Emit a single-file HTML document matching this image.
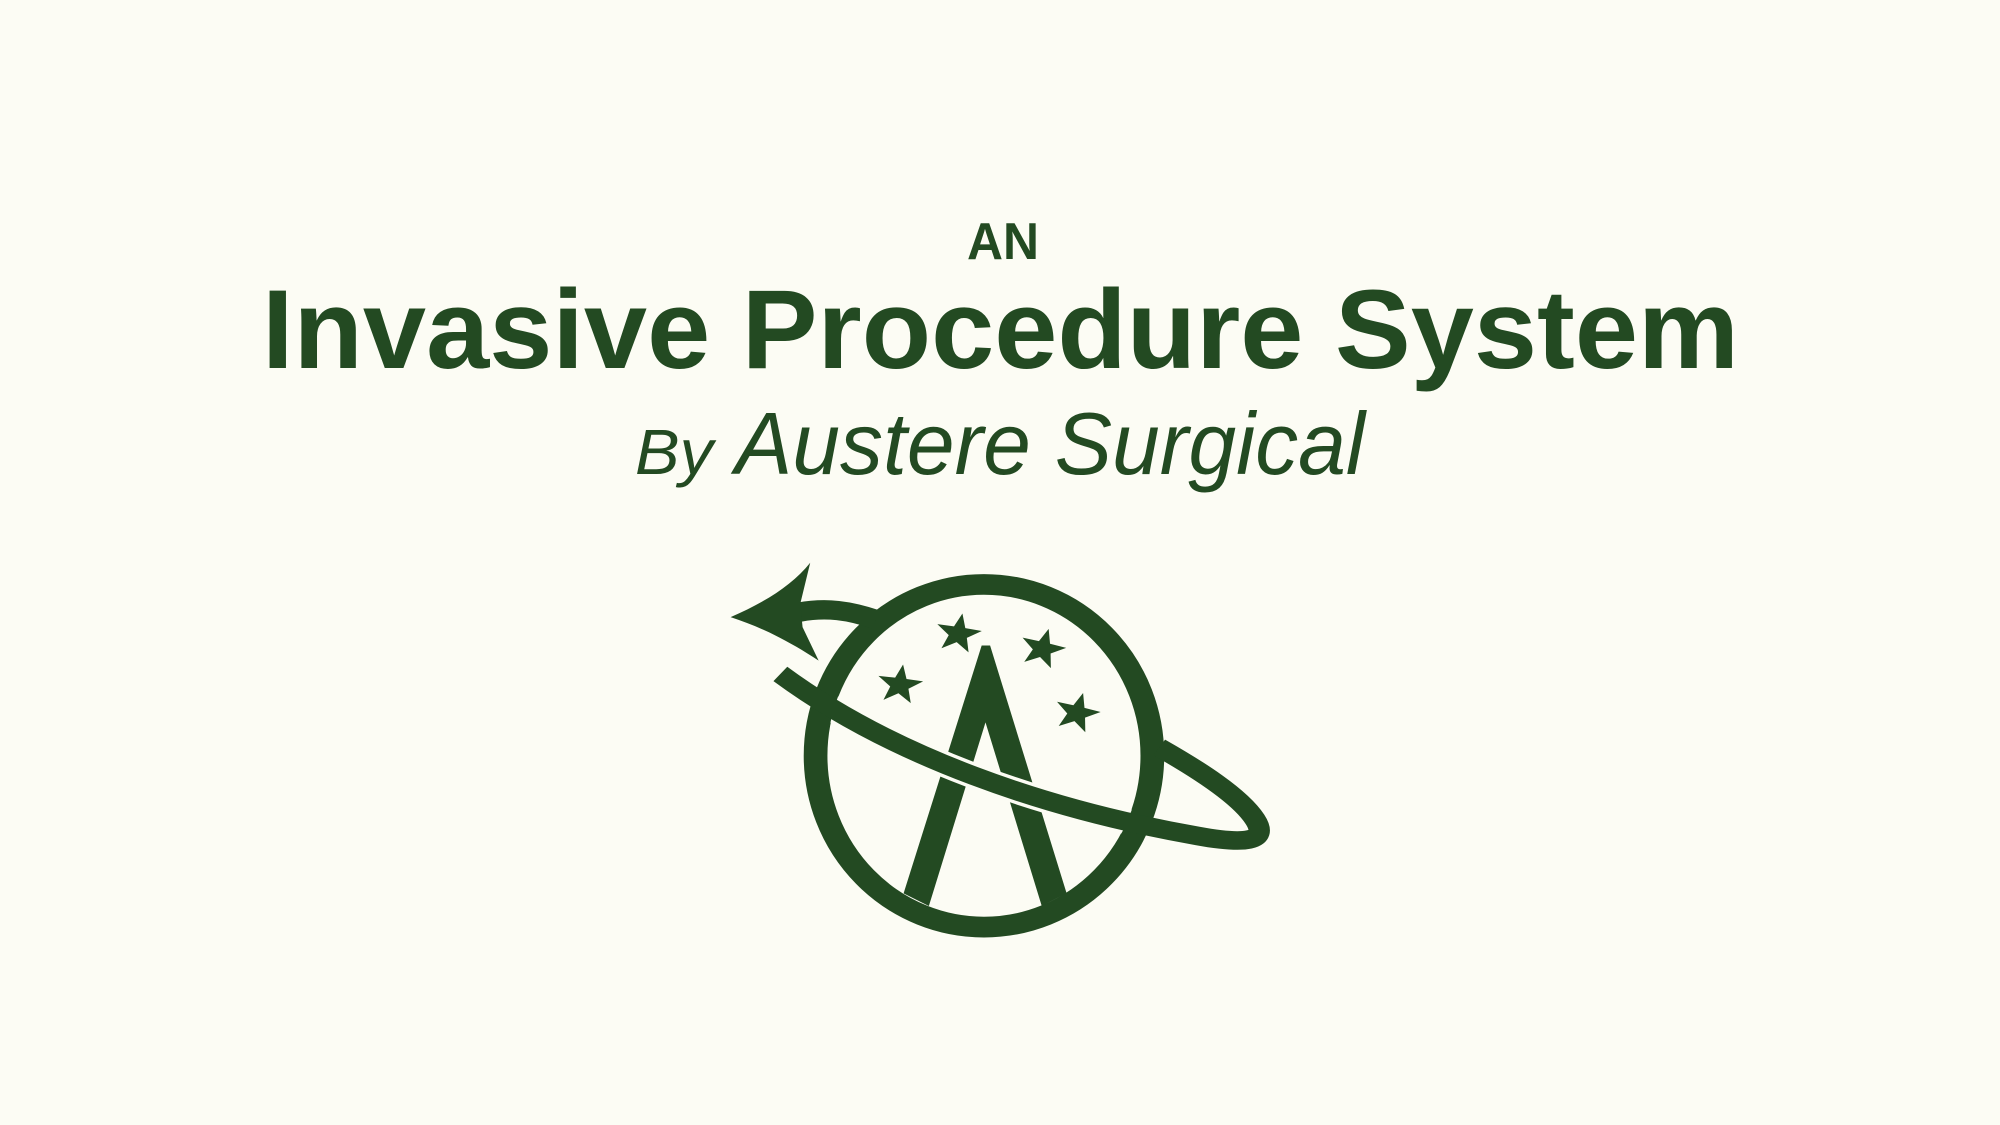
<!DOCTYPE html>
<html><head><meta charset="utf-8"><style>
html,body{margin:0;padding:0;background:#fcfcf4;}
svg{display:block}
</style></head><body>
<svg width="2000" height="1125" viewBox="0 0 2000 1125" xmlns="http://www.w3.org/2000/svg">
<rect width="2000" height="1125" fill="#fcfcf4"/>
<g fill="#234a22" font-family="'Liberation Sans', sans-serif">
<text x="967" y="259" font-size="52" font-weight="bold" textLength="72" lengthAdjust="spacingAndGlyphs">AN</text>
<text x="262" y="368" font-size="112" font-weight="bold" textLength="1477" lengthAdjust="spacingAndGlyphs">Invasive Procedure System</text>
<text x="635" y="474" font-size="64" font-style="italic" textLength="78" lengthAdjust="spacingAndGlyphs">By</text>
<text x="735" y="474" font-size="88" font-style="italic" textLength="630" lengthAdjust="spacingAndGlyphs">Austere Surgical</text>
</g>
<defs>
<clipPath id="inner"><ellipse cx="742" cy="640" rx="410" ry="482"/></clipPath>
<polygon id="st" points="0,-62 15,-20 59,-19 24,8 36,50 0,25 -36,50 -24,8 -59,-19 -15,-20"/>
</defs>
<g transform="translate(700,542) scale(0.3827,0.334)" fill="#234a22">
<ellipse cx="742" cy="640" rx="440" ry="513" fill="none" stroke="#234a22" stroke-width="62"/>
<path d="M736 310 L758 310 L958 1052 L893 1090 L746 540 L598 1090 L532 1052 Z"/>
<g clip-path="url(#inner)">
<path d="M210 395 C500 640 900 800 1300 880" fill="none" stroke="#fcfcf4" stroke-width="76"/>
</g>
<path d="M210 395 C500 640 900 800 1300 880 C1420 905 1490 900 1450 830 C1410 760 1300 680 1200 615" fill="none" stroke="#234a22" stroke-width="56"/>
<path d="M460 232 C390 205 330 195 260 210" fill="none" stroke="#234a22" stroke-width="58"/>
<path d="M80 225 C170 180 240 130 288 62 L262 185 L268 255 L310 355 C230 295 160 255 80 225 Z"/>
<use href="#st" transform="translate(675,275) rotate(10)"/>
<use href="#st" transform="translate(895,320) rotate(15)"/>
<use href="#st" transform="translate(522,428) rotate(8)"/>
<use href="#st" transform="translate(985,512) rotate(15)"/>
</g>
</svg>
</body></html>
